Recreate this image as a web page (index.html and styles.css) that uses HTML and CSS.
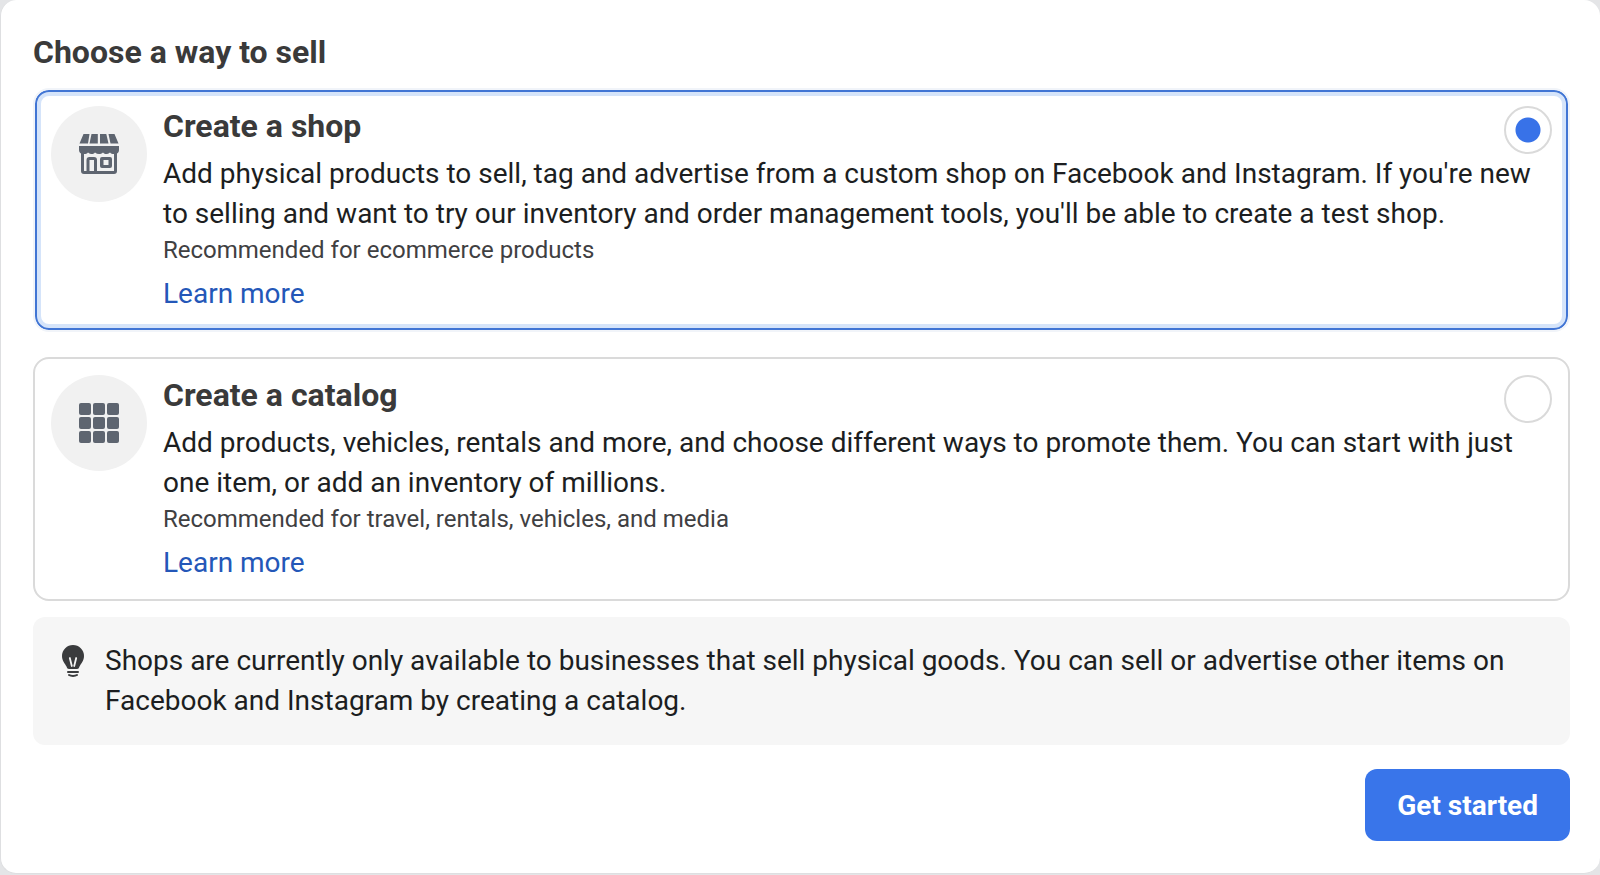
FILE: index.html
```
<!DOCTYPE html>
<html lang="en">
<head>
<meta charset="utf-8">
<meta name="viewport" content="width=device-width, initial-scale=1">
<title>Choose a way to sell</title>
<link rel="stylesheet" href="styles.css">
</head>
<body>
<form class="dialog">
  <h1 class="heading">Choose a way to sell</h1>

  <div class="options">
    <div class="option">
      <div class="option-icon">
        <svg width="40" height="40" viewBox="0 0 40 40" fill="#5e6570">
          <path d="M4.500 0H10.500L9 9.500H.500zM12.500 0h6.300v9.500h-8.300zM21 0h6.300l2.200 9.500H21zM29.500 0h6L39.500 9.500h-8z"/>
          <path fill-rule="evenodd" d="M0 12h40v4c0 2-1 3-2 3.500V37a3 3 0 0 1-3 3H5a3 3 0 0 1-3-3V19.500C1 19 0 18 0 16zM5 20v17h2.500V26a3 3 0 0 1 3-3h4.500a3 3 0 0 1 3 3v11h17V20c-2 0-3-.5-4-1.500-2.500 2-5 2-7 0-2.500 2-5.500 2-8 0-2 2-4.500 2-7 0-1 1-2 1.500-4 1.500zM10.500 26v11h4.500V26z"/>
          <path fill-rule="evenodd" d="M23 23h8a2 2 0 0 1 2 2v7a2 2 0 0 1-2 2h-8a2 2 0 0 1-2-2v-7a2 2 0 0 1 2-2zM24.500 26v5h5v-5z"/>
        </svg>
      </div>
      <div class="option-body">
        <div class="option-top">
          <label class="option-title" for="shop">Create a shop</label>
          <input class="radio" type="radio" name="way" id="shop" checked>
        </div>
        <p class="text">Add physical products to sell, tag and advertise from a custom shop on Facebook and Instagram. If you're new to selling and want to try our inventory and order management tools, you'll be able to create a test shop.</p>
        <p class="hint">Recommended for ecommerce products</p>
        <a class="link" href="#">Learn more</a>
      </div>
    </div>

    <div class="option">
      <div class="option-icon">
        <svg width="40" height="40" viewBox="0 0 40 40" fill="#5e6570">
          <rect x="0" y="0" width="12" height="12" rx="2"/>
          <rect x="14" y="0" width="12" height="12" rx="2"/>
          <rect x="28" y="0" width="12" height="12" rx="2"/>
          <rect x="0" y="14" width="12" height="12" rx="2"/>
          <rect x="14" y="14" width="12" height="12" rx="2"/>
          <rect x="28" y="14" width="12" height="12" rx="2"/>
          <rect x="0" y="28" width="12" height="12" rx="2"/>
          <rect x="14" y="28" width="12" height="12" rx="2"/>
          <rect x="28" y="28" width="12" height="12" rx="2"/>
        </svg>
      </div>
      <div class="option-body">
        <div class="option-top">
          <label class="option-title" for="catalog">Create a catalog</label>
          <input class="radio" type="radio" name="way" id="catalog">
        </div>
        <p class="text">Add products, vehicles, rentals and more, and choose different ways to promote them. You can start with just one item, or add an inventory of millions.</p>
        <p class="hint">Recommended for travel, rentals, vehicles, and media</p>
        <a class="link" href="#">Learn more</a>
      </div>
    </div>
  </div>

  <div class="notice">
    <svg class="bulb" width="24" height="32" viewBox="0 0 24 32">
      <path fill="#3a3b3d" d="M12 0a11 11 0 0 1 11 11c0 5-3 7.500-4.500 10.500-.8 1.800-1 2.500-2.500 2.500H8c-1.500 0-1.700-.7-2.500-2.500C4 18.500 1 16 1 11A11 11 0 0 1 12 0z"/>
      <path fill="none" stroke="#f6f6f6" stroke-width="1.800" stroke-linecap="round" stroke-linejoin="round" d="M8.800 13l2 8M15.200 13l-2 8"/>
      <path fill="none" stroke="#3a3b3d" stroke-width="2" stroke-linecap="round" d="M7 27h10M8 30c2 1.300 6 1.300 8 0"/>
    </svg>
    <p class="text">Shops are currently only available to businesses that sell physical goods. You can sell or advertise other items on Facebook and Instagram by creating a catalog.</p>
  </div>

  <div class="actions">
    <button class="button" type="submit">Get started</button>
  </div>
</form>
</body>
</html>
```
FILE: styles.css
```
* { box-sizing: border-box; }

body {
  margin: 0;
  background: #e4e5e7;
  font-family: Roboto, "Liberation Sans", sans-serif;
  color: #1c1e21;
}

.dialog {
  padding: 32px 30px 32px 32px;
  border: 1px solid #dedfe1;
  border-width: 0 0 1px 1px;
  border-radius: 16px;
  background: #fff;
}

.heading {
  margin: 0 0 16px;
  font-size: 32px;
  line-height: 40px;
  font-weight: 700;
  color: #3a3a3a;
}

.options {
  display: flex;
  flex-direction: column;
  gap: 25px;
}

.option {
  display: flex;
  gap: 16px;
  padding: 16px;
  border: 2px solid #dadada;
  border-radius: 16px;
}

/* the ring sits inside the border so the card keeps its size */
.option:has(:checked) {
  border-color: #f1f4f9;
  box-shadow: inset 0 0 0 2px #4175d4, inset 0 0 0 6px #d5e4fa;
}

.option-icon {
  display: flex;
  flex: none;
  align-items: center;
  justify-content: center;
  width: 96px;
  height: 96px;
  border-radius: 50%;
  background: #f1f1f1;
}

.option-body { flex: 1; }

.option-top {
  display: flex;
  justify-content: space-between;
}

.option-title {
  font-size: 32px;
  line-height: 40px;
  font-weight: 700;
  color: #3a3a3a;
}

.radio {
  appearance: none;
  width: 48px;
  height: 48px;
  margin: 0;
  border: 2px solid #dadada;
  border-radius: 50%;
}

.radio:checked { background: radial-gradient(circle, #3872e8 12px, #fff 13px) border-box; }

.text {
  margin: 0;
  font-size: 28px;
  line-height: 40px;
}

.hint {
  margin: 0 0 8px;
  font-size: 24px;
  line-height: 32px;
  color: #3f4042;
}

.link {
  display: block;
  width: fit-content;
  font-size: 28px;
  line-height: 40px;
  color: #2457b8;
  text-decoration: none;
}

.notice {
  display: flex;
  gap: 20px;
  margin-top: 16px;
  padding: 24px 28px;
  border-radius: 12px;
  background: #f6f6f6;
}

.bulb {
  flex: none;
  margin-top: 4px;
}

.actions {
  display: flex;
  justify-content: flex-end;
  margin-top: 24px;
}

.button {
  height: 72px;
  padding: 0 32px;
  border: 0;
  border-radius: 12px;
  background: #3975ea;
  font-family: inherit;
  font-size: 28px;
  font-weight: 700;
  color: #fff;
}
```
